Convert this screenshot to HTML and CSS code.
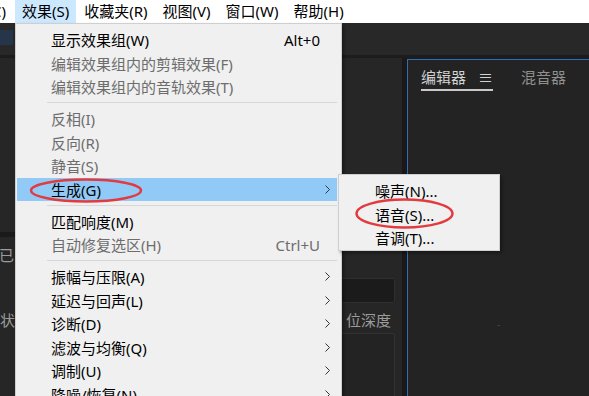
FILE: index.html
```html
<!DOCTYPE html>
<html lang="zh-CN">
<head>
<meta charset="UTF-8">
<meta name="viewport" content="width=device-width, initial-scale=1.0">
<title>效果菜单</title>
<link rel="stylesheet" href="styles.css">
</head>
<body>

<div class="menubar">
    <div class="mb-item cut"><span>剪辑(C)</span></div>
    <div class="mb-item open">效果(S)</div>
    <div class="mb-item">收藏夹(R)</div>
    <div class="mb-item">视图(V)</div>
    <div class="mb-item">窗口(W)</div>
    <div class="mb-item">帮助(H)</div>
</div>

<div class="workspace">
    <div class="topband"><div class="tab-mark"></div></div>
    <div class="rule"></div>
    <div class="panels">
        <div class="left">
            <div class="upper"></div>
            <div class="split"></div>
            <div class="lower">
                <div class="note">已</div>
                <div class="search"></div>
                <div class="cols">
                    <span>状态</span>
                    <span class="col-right">位深度</span>
                </div>
                <div class="list"></div>
            </div>
        </div>
        <div class="divider"></div>
        <div class="editor">
            <div class="tabs">
                <div class="tab active">编辑器 <span class="burger">≡</span></div>
                <div class="tab">混音器</div>
            </div>
            <div class="tick">-</div>
        </div>
    </div>
</div>

<!-- 效果 下拉菜单 -->
<div class="dropdown">
    <div class="item"><span class="label">显示效果组(W)</span><span class="key">Alt+0</span><span class="arrow"></span></div>
    <div class="item off"><span class="label">编辑效果组内的剪辑效果(F)</span><span class="arrow"></span></div>
    <div class="item off"><span class="label">编辑效果组内的音轨效果(T)</span><span class="arrow"></span></div>
    <div class="sep"></div>
    <div class="item off"><span class="label">反相(I)</span><span class="arrow"></span></div>
    <div class="item off"><span class="label">反向(R)</span><span class="arrow"></span></div>
    <div class="item off"><span class="label">静音(S)</span><span class="arrow"></span></div>
    <div class="item hot"><span class="label">生成(G)</span><span class="arrow"><svg width="5" height="9" viewBox="0 0 5 9"><polyline points="0.5,0.5 4.5,4.5 0.5,8.5" fill="none" stroke="#2b3a4a" stroke-width="1"/></svg></span></div>
    <div class="sep"></div>
    <div class="item"><span class="label">匹配响度(M)</span><span class="arrow"></span></div>
    <div class="item off"><span class="label">自动修复选区(H)</span><span class="key">Ctrl+U</span><span class="arrow"></span></div>
    <div class="sep"></div>
    <div class="item"><span class="label">振幅与压限(A)</span><span class="arrow"><svg width="5" height="9" viewBox="0 0 5 9"><polyline points="0.5,0.5 4.5,4.5 0.5,8.5" fill="none" stroke="#333" stroke-width="1"/></svg></span></div>
    <div class="item"><span class="label">延迟与回声(L)</span><span class="arrow"><svg width="5" height="9" viewBox="0 0 5 9"><polyline points="0.5,0.5 4.5,4.5 0.5,8.5" fill="none" stroke="#333" stroke-width="1"/></svg></span></div>
    <div class="item"><span class="label">诊断(D)</span><span class="arrow"><svg width="5" height="9" viewBox="0 0 5 9"><polyline points="0.5,0.5 4.5,4.5 0.5,8.5" fill="none" stroke="#333" stroke-width="1"/></svg></span></div>
    <div class="item"><span class="label">滤波与均衡(Q)</span><span class="arrow"><svg width="5" height="9" viewBox="0 0 5 9"><polyline points="0.5,0.5 4.5,4.5 0.5,8.5" fill="none" stroke="#333" stroke-width="1"/></svg></span></div>
    <div class="item"><span class="label">调制(U)</span><span class="arrow"><svg width="5" height="9" viewBox="0 0 5 9"><polyline points="0.5,0.5 4.5,4.5 0.5,8.5" fill="none" stroke="#333" stroke-width="1"/></svg></span></div>
    <div class="item"><span class="label">降噪/恢复(N)</span><span class="arrow"><svg width="5" height="9" viewBox="0 0 5 9"><polyline points="0.5,0.5 4.5,4.5 0.5,8.5" fill="none" stroke="#333" stroke-width="1"/></svg></span></div>
</div>

<!-- 生成 子菜单 -->
<div class="submenu">
    <div class="sub-item">噪声(N)...</div>
    <div class="sub-item">语音(S)...</div>
    <div class="sub-item">音调(T)...</div>
</div>

<!-- 红色圈注 -->
<svg class="marks" width="589" height="396" viewBox="0 0 589 396">
    <ellipse cx="86" cy="190.5" rx="55" ry="11" fill="none" stroke="#e23b3f" stroke-width="2.4"/>
    <ellipse cx="404.5" cy="213.5" rx="48" ry="14" fill="none" stroke="#e23b3f" stroke-width="2.4"/>
</svg>

</body>
</html>
```

FILE: styles.css
```css
body {
    margin: 0;
    width: 589px;
    height: 396px;
    overflow: hidden;
    position: relative;
    background: #232323;
    font-family: "Noto Sans", "Noto Sans CJK SC", sans-serif;
    font-size: 15px;
}

/* 菜单栏 */
.menubar {
    height: 23px;
    background: #fff;
    display: flex;
    color: #000;
}

.mb-item {
    padding: 0 7px;
    line-height: 23px;
    white-space: nowrap;
    margin-right: 1px;
}

.mb-item.cut {
    width: 15px;
    box-sizing: border-box;
    padding: 0 9px 0 0;
    margin: 0;
    display: flex;
    justify-content: flex-end;
    overflow: hidden;
}

.mb-item.open {
    background: #cce8ff;
}

/* 深色工作区 */
.workspace {
    display: flex;
    flex-direction: column;
    height: 373px;
}

.topband {
    height: 32px;
    flex-shrink: 0;
    background: #282828;
}

.tab-mark {
    width: 13px;
    height: 15px;
    margin-top: 7px;
    background: #26354a;
}

.rule {
    height: 3px;
    flex-shrink: 0;
    background: #1c1c1c;
}

.panels {
    flex: 1;
    min-height: 0;
    display: flex;
    background: #1c1c1c;
}

.left {
    width: 402px;
    display: flex;
    flex-direction: column;
    background: #262626;
}

.upper {
    height: 174px;
    flex-shrink: 0;
}

.split {
    height: 5px;
    flex-shrink: 0;
    background: #1a1a1a;
}

.lower {
    flex: 1;
    padding-top: 10px;
    color: #9c9c9c;
}

.note {
    line-height: 16px;
    margin-left: -1px;
}

.search {
    height: 25px;
    box-sizing: border-box;
    margin: 15px 7px 0 40px;
    background: #1b1b1b;
    border: 1px solid #2f2f2f;
    border-radius: 2px;
}

.cols {
    display: flex;
    line-height: 20px;
    margin-top: 7px;
}

.col-right {
    margin-left: auto;
    padding-right: 11px;
}

.list {
    height: 80px;
    margin: 3px 7px 0 40px;
    border: 1px solid #323232;
    border-radius: 2px;
    background: #232323;
}

.divider {
    width: 5px;
    background: #1c1818;
}

.editor {
    flex: 1;
    margin-top: 1px;
    background: #232323;
    border-top: 1px solid #2f6db5;
    border-left: 1px solid #2f6db5;
}

.tabs {
    display: flex;
    padding: 7px 0 0 13px;
    gap: 28px;
}

.tab {
    line-height: 20px;
    padding-bottom: 2px;
    color: #8f8f8f;
    white-space: nowrap;
}

.tab.active {
    color: #d2d2d2;
    border-bottom: 2px solid #c9c9c9;
}

.burger {
    margin-left: 8px;
}

.tick {
    margin: 228px 0 0 89px;
    font-size: 10px;
    line-height: 10px;
    color: #4a4a4a;
}

/* 下拉菜单 */
.dropdown {
    position: absolute;
    left: 15px;
    top: 23px;
    width: 327px;
    height: 400px;
    box-sizing: border-box;
    padding: 4px 4px 0 1px;
    background: #f0f0f0;
    border: 1px solid #cfcfcf;
    box-shadow: 2px 2px 3px rgba(0,0,0,0.35);
}

.item {
    height: 23.5px;
    display: flex;
    align-items: center;
    padding: 0 7px 0 34px;
    color: #000;
    white-space: nowrap;
}

.item.off {
    color: #6d6d6d;
}

.item.hot {
    background: #91c9f7;
}

.key {
    margin-left: auto;
}

.arrow {
    width: 5px;
    height: 9px;
    margin-left: 5px;
    display: flex;
}

.label + .arrow {
    margin-left: auto;
}

.sep {
    height: 8.5px;
    display: flex;
    align-items: center;
    padding-left: 30px;
}

.sep::after {
    content: "";
    flex: 1;
    height: 1px;
    background: #d7d7d7;
}

/* 子菜单 */
.submenu {
    position: absolute;
    left: 338px;
    top: 174px;
    width: 162px;
    height: 77px;
    box-sizing: border-box;
    padding-top: 5px;
    background: #f0f0f0;
    border: 1px solid #cfcfcf;
    box-shadow: 2px 2px 3px rgba(0,0,0,0.35);
}

.sub-item {
    height: 23.5px;
    line-height: 23.5px;
    padding-left: 36px;
    color: #000;
}

.marks {
    position: absolute;
    left: 0;
    top: 0;
    pointer-events: none;
}
```
